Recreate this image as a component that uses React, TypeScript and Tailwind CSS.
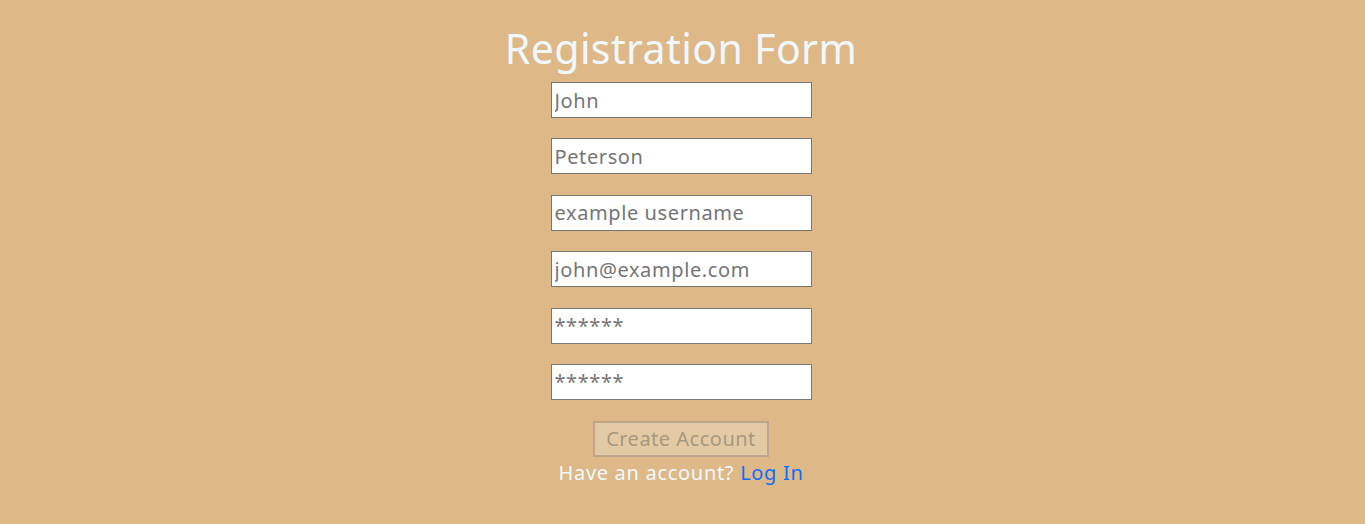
import React from 'react';

const fields = [
  { type: 'text', placeholder: 'John' },
  { type: 'text', placeholder: 'Peterson' },
  { type: 'text', placeholder: 'example username' },
  { type: 'email', placeholder: 'john@example.com' },
  { type: 'password', placeholder: '******' },
  { type: 'password', placeholder: '******' },
];

export default function App() {
  return (
    <div
      className="min-h-[524px] w-full bg-[#deb887] flex flex-col items-center pt-[22px] pr-[3px]"
      style={{ fontFamily: '"Noto Sans", "Open Sans", sans-serif' }}>
      <h1 className="text-[41px] leading-[52px] text-[#f0f8ff] tracking-[0.4px] mb-[8px]">Registration Form</h1>
      <form className="flex flex-col items-center">
        {fields.map((f, i) => (
          <input
            key={i}
            type="text"
            placeholder={f.placeholder}
            className="w-[261px] h-[36px] bg-white border border-[#767676] px-[3px] text-[20px] tracking-[0.6px] text-[#333] placeholder:text-[#757575] mb-[20.4px] outline-none"
          />
        ))}
        <button
          type="submit"
          disabled
          className="mt-[1px] w-[176px] h-[36px] bg-[#e4c9a5] border-2 border-[#bca68b] text-[20px] tracking-[0.5px] text-[#a8977f] leading-none whitespace-nowrap">
          Create Account
        </button>
        <p className="text-[20px] tracking-[0.7px] text-[#f0f8ff] leading-[30px] mt-[1px]">
          Have an account? <a href="#" className="text-[#0d6efd]">Log In</a>
        </p>
      </form>
    </div>
  );
}
